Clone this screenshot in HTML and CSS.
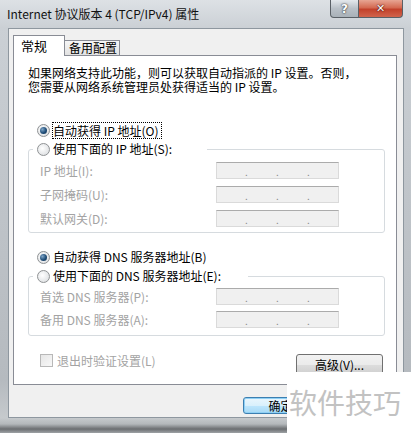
FILE: index.html
```html
<!DOCTYPE html>
<html lang="zh-CN">
<head>
<meta charset="utf-8">
<title>Internet 协议版本 4 (TCP/IPv4) 属性</title>
<link rel="stylesheet" href="styles.css">
</head>
<body>
<div class="window">
  <div class="titlebar">
    <span class="title">Internet 协议版本 4 (TCP/IPv4) 属性</span>
    <div class="caption-btns">
      <span class="cb help">?</span><span class="cb close">✕</span>
    </div>
  </div>
  <div class="client">
    <div class="tabs">
      <span class="tab active">常规</span><span class="tab">备用配置</span>
    </div>
    <div class="panel">
      <p class="intro"><span class="line">如果网络支持此功能，则可以获取自动指派的 IP 设置。否则，</span><span class="line">您需要从网络系统管理员处获得适当的 IP 设置。</span></p>
      <div class="opt first"><span class="radio checked"></span><span class="focus">自动获得 IP 地址(O)</span></div>
      <fieldset class="group">
        <legend class="opt legend-ip"><span class="radio"></span>使用下面的 IP 地址(S):</legend>
        <div class="field f1"><span class="lbl">IP 地址(I):</span><span class="ip"><span></span><i>.</i><span></span><i>.</i><span></span><i>.</i><span></span></span></div>
        <div class="field"><span class="lbl">子网掩码(U):</span><span class="ip"><span></span><i>.</i><span></span><i>.</i><span></span><i>.</i><span></span></span></div>
        <div class="field"><span class="lbl">默认网关(D):</span><span class="ip"><span></span><i>.</i><span></span><i>.</i><span></span><i>.</i><span></span></span></div>
      </fieldset>
      <div class="opt dns-auto"><span class="radio checked"></span><span>自动获得 DNS 服务器地址(B)</span></div>
      <fieldset class="group group-dns">
        <legend class="opt legend-dns"><span class="radio"></span>使用下面的 DNS 服务器地址(E):</legend>
        <div class="field f1b"><span class="lbl">首选 DNS 服务器(P):</span><span class="ip"><span></span><i>.</i><span></span><i>.</i><span></span><i>.</i><span></span></span></div>
        <div class="field fb"><span class="lbl">备用 DNS 服务器(A):</span><span class="ip"><span></span><i>.</i><span></span><i>.</i><span></span><i>.</i><span></span></span></div>
      </fieldset>
      <div class="bottom-row">
        <label class="check"><span class="box"></span>退出时验证设置(L)</label>
        <button class="btn adv">高级(V)...</button>
      </div>
    </div>
    <div class="footer">
      <button class="btn ok">确定</button>
    </div>
  </div>
  <div class="watermark">软件技巧</div>
</div>
</body>
</html>
```
FILE: styles.css
```css
* { box-sizing: border-box; }
html, body { margin: 0; padding: 0; }
body {
  font-family: "Noto Sans CJK SC", "Noto Sans", sans-serif;
  font-size: 12px;
  color: #000;
  background: #fff;
}
.window {
  position: relative;
  width: 411px;
  height: 433px;
  display: flex;
  flex-direction: column;
  overflow: hidden;
  background: linear-gradient(180deg, #dde1e5 0px, #cbd0d5 28px, #bfc4c9 200px, #b5babf 380px, #c6cacd 418px, #b4b8bb 424px, #6b6e71 429px, #9ea2a5 433px);
}
.titlebar {
  height: 28px;
  flex: none;
  display: flex;
  align-items: flex-start;
  padding-left: 7px;
}
.title {
  margin-top: 5px;
  line-height: 18px;
  font-size: 12px;
  color: #111;
}
.caption-btns {
  margin-left: auto;
  margin-right: 8px;
  display: flex;
}
.cb {
  height: 18px;
  display: flex;
  align-items: center;
  justify-content: center;
  font-family: "DejaVu Sans", sans-serif;
  font-weight: bold;
  color: #fff;
  border: 1px solid #5a6066;
  border-top: none;
}
.help {
  width: 29px;
  font-size: 12px;
  border-radius: 0 0 0 4px;
  background: linear-gradient(180deg, #e4e8ec, #b9c0c7 50%, #a9b1b8);
  text-shadow: 0 0 2px #333, 0 0 1px #333;
}
.close {
  width: 44px;
  font-size: 11px;
  border-left: none;
  border-radius: 0 0 4px 0;
  background: linear-gradient(180deg, #e7a593, #d46a52 45%, #c2412b 55%, #d1644c);
  text-shadow: 0 0 2px #4a0c00, 0 0 1px #4a0c00;
}
.client {
  flex: none;
  height: 390px;
  margin: 0 7px 0 8px;
  background: #f0f0f0;
  border: 1px solid #8e979f;
  display: flex;
  flex-direction: column;
}
.tabs {
  height: 26px;
  flex: none;
  display: flex;
  align-items: flex-end;
  padding-left: 4px;
}
.tab {
  position: relative;
  height: 15px;
  width: 56px;
  margin-left: -1px;
  border: 1px solid #898c95;
  border-bottom: none;
  background: linear-gradient(180deg, #f6f6f6, #e2e2e2);
  font-size: 12px;
  line-height: 14px;
  padding-left: 4px;
}
.tab.active {
  z-index: 1;
  height: 21px;
  width: 52px;
  margin-left: 0;
  margin-bottom: -1px;
  background: #fff;
  line-height: 19px;
  padding-left: 7px;
  font-size: 13px;
}
.panel {
  flex: none;
  height: 330px;
  width: 384px;
  margin-left: 4px;
  background: #fff;
  border: 1px solid #898c95;
  padding: 10px 11px 0 14px;
  display: flex;
  flex-direction: column;
}
.intro {
  margin: 0;
  font-size: 12px;
  white-space: nowrap;
  display: flex;
  flex-direction: column;
}
.intro .line {
  display: block;
  height: 14px;
  line-height: 14px;
  overflow: visible;
}
.opt {
  display: flex;
  align-items: center;
  height: 16px;
  line-height: 16px;
  padding-left: 9px;
}
.opt.first { margin-top: 28px; }
.radio {
  width: 13px;
  height: 13px;
  flex: none;
  margin-right: 3px;
  border-radius: 50%;
  border: 1px solid #8f9294;
  background: radial-gradient(circle at 40% 40%, #ffffff, #e2e4e6 70%, #cfd3d6);
  position: relative;
}
.radio.checked::after {
  content: "";
  position: absolute;
  left: 2px;
  top: 2px;
  width: 7px;
  height: 7px;
  border-radius: 50%;
  background: radial-gradient(circle at 35% 35%, #7fa6c8, #1f4d78 55%, #0f2e4c);
}
.focus {
  outline: 1px dotted #000;
  outline-offset: 0;
  line-height: 15px;
  padding-right: 2px;
}
.group {
  margin: 4px 0 0 0;
  padding: 0 0 5px 4px;
  border: 1px solid #d6dbdf;
  border-radius: 3px;
  min-width: 0;
}
.group legend {
  padding: 0 0 0 4px;
  margin: 0;
  background: #fff;
  height: 14px;
  line-height: 14px;
}
.legend-ip { width: 174px; }
.legend-dns { width: 215px; }
.group-dns { padding-bottom: 7px; }
.field {
  display: flex;
  align-items: center;
  height: 17px;
  margin-top: 7px;
  padding-left: 7px;
  color: #a3a3a3;
}
.field.f1 { margin-top: 6px; }
.field.f1b { margin-top: 5px; }
.field.fb { margin-top: 6px; }
.lbl {
  width: 176px;
  flex: none;
  line-height: 17px;
  white-space: nowrap;
}
.ip {
  width: 123px;
  height: 17px;
  flex: none;
  display: flex;
  align-items: flex-end;
  background: #f0f0f0;
  border: 1px solid #dadada;
  border-top-color: #ababab;
}
.ip span { flex: 1; }
.ip i {
  font-style: normal;
  width: 3px;
  line-height: 12px;
  font-size: 10px;
  color: #888;
  text-align: center;
}
.dns-auto { margin-top: 16px; }
.bottom-row {
  margin-top: 16px;
  display: flex;
  align-items: flex-start;
  justify-content: space-between;
}
.check {
  display: flex;
  align-items: center;
  height: 16px;
  padding-left: 12px;
  color: #a3a3a3;
}
.box {
  width: 13px;
  height: 13px;
  margin-right: 4px;
  border: 1px solid #b8b8b8;
  background: linear-gradient(135deg, #e6e6e6, #f8f8f8);
}
.btn {
  font-family: "Noto Sans CJK SC", sans-serif;
  font-size: 12px;
  color: #000;
  height: 21px;
  padding: 0;
  line-height: 18px;
  border: 1px solid #707070;
  border-radius: 3px;
  background: linear-gradient(180deg, #f2f2f2 0%, #ebebeb 50%, #dddddd 51%, #cfcfcf 100%);
}
.adv {
  width: 87px;
  margin-top: 2px;
  margin-right: 2px;
}
.footer {
  flex: 1;
  display: flex;
  justify-content: flex-end;
  align-items: flex-start;
  padding-top: 12px;
  padding-right: 85px;
}
.footer .btn {
  width: 75px;
  height: 17px;
  line-height: 14px;
}
.footer .ok {
  border-color: #3c7fb1;
  background: linear-gradient(180deg, #eaf6fd 0%, #d9f0fc 50%, #bee6fd 51%, #a7d9f5 100%);
  box-shadow: inset 0 0 0 1px #8fd0f5;
}
.watermark {
  position: absolute;
  left: 287px;
  top: 372px;
  width: 124px;
  height: 61px;
  background: #fff;
  color: #c2c2c2;
  font-size: 28px;
  line-height: 28px;
  padding: 16px 0 0 2px;
  white-space: nowrap;
}
```
